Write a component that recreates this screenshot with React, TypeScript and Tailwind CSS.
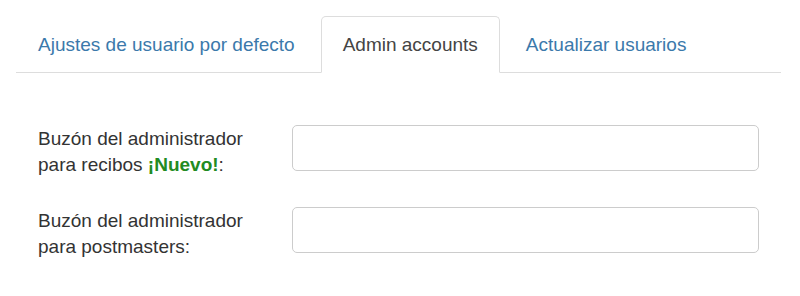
import React from "react";

export default function App() {
  const font = { fontFamily: '"Liberation Sans", Arial, sans-serif' };
  return (
    <div className="w-[800px] h-[296px] bg-white pt-4 pl-4 pr-[19px]" style={font}>
      <ul className="flex border-b border-[#dddddd] text-[19px] leading-[26px]">
        <li className="mr-1 -mb-px">
          <a className="block px-[21px] pt-[15px] pb-[14px] text-[#3b79ab] border border-transparent rounded-t-[5px]">
            Ajustes de usuario por defecto
          </a>
        </li>
        <li className="mr-1 -mb-px">
          <a className="block px-[21px] pt-[15px] pb-[14px] text-[#444444] bg-white border border-[#dddddd] border-b-white rounded-t-[5px]">
            Admin accounts
          </a>
        </li>
        <li className="mr-1 -mb-px">
          <a className="block px-[21px] pt-[15px] pb-[14px] text-[#3b79ab] border border-transparent rounded-t-[5px]">
            Actualizar usuarios
          </a>
        </li>
      </ul>
      <div className="pt-[52px] pl-[22px] text-[19px] leading-[26px] text-[#333333]">
        <div className="flex items-start">
          <label className="w-[254px] pt-px">
            Buzón del administrador
            <br />
            para recibos <b className="text-[#228b22] font-bold">¡Nuevo!</b>:
          </label>
          <input className="w-[467px] h-[46px] border border-[#cccccc] rounded-[5px] bg-white" />
        </div>
        <div className="flex items-start mt-[29px]">
          <label className="w-[254px] pt-px">
            Buzón del administrador
            <br />
            para postmasters:
          </label>
          <input className="w-[467px] h-[46px] border border-[#cccccc] rounded-[5px] bg-white" />
        </div>
      </div>
    </div>
  );
}
